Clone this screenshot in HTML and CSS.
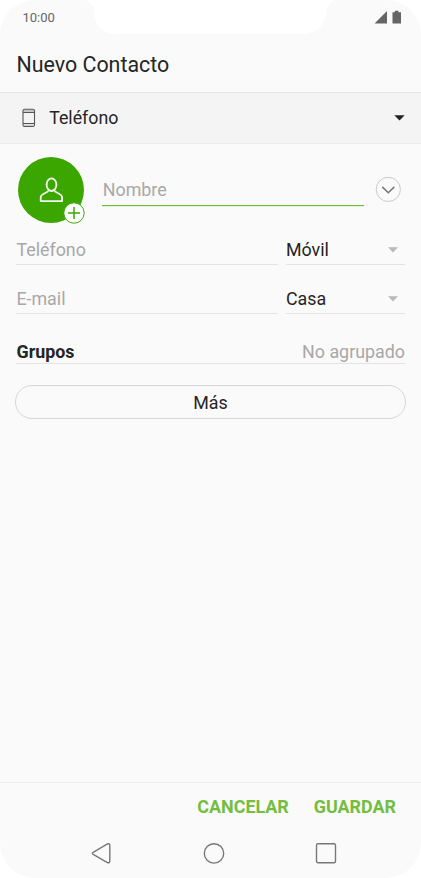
FILE: index.html
```html
<!DOCTYPE html>
<html lang="es">
<head>
<meta charset="utf-8">
<title>Nuevo Contacto</title>
<link rel="stylesheet" href="styles.css">
</head>
<body>
<div class="phone">
  <svg class="notch" width="252" height="34" viewBox="0 0 252 34"><path d="M0 0C7 1 10 7 10 13C11 25 19 34 32 34H219C232 34 241 25 242 13C243 7 245 1 252 0Z" fill="#fff"/></svg>
  <header class="status">
    <span>10:00</span>
    <svg width="28" height="14" viewBox="0 0 28 14"><path d="M1.5 13.5L14 1V13.5ZM19.5 2.2H21.8V0.8H25.5V2.2H28V13.5H19.5Z" fill="#656565"/></svg>
  </header>
  <h1 class="title">Nuevo Contacto</h1>
  <div class="account">
    <svg width="14" height="20" viewBox="0 0 14 20" fill="none" stroke="#555"><rect x="1" y="1.2" width="11.5" height="17.3" rx="1.6" stroke-width="1.1"/><path d="M1 4.4H12.5M1 15.5H12.5" stroke-width="1.2"/><path d="M2 2.6H12M2 17.2H12" stroke="#bbb"/></svg>
    <span class="account-name">Teléfono</span>
    <svg class="caret" width="11" height="6" viewBox="0 0 11 6"><path d="M0.3 0.3H10.7L5.5 5.6Z" fill="#222"/></svg>
  </div>
  <main class="form">
    <div class="name-row">
      <div class="avatar">
        <svg width="24" height="26" viewBox="0 0 24 26" fill="none" stroke="#f2faee" stroke-width="1.8" stroke-linejoin="round"><ellipse cx="12.5" cy="7.7" rx="4.9" ry="6.3"/><path d="M9.3 13.5C9.3 16 1.7 16.2 1.7 20.4V24.1H23.1V20.4C23.1 16.2 15.7 16 15.7 13.5"/></svg>
        <svg class="badge" width="22" height="22" viewBox="0 0 22 22"><circle cx="11" cy="11" r="10.2" fill="#fcfffb" stroke="#43a817" stroke-width="1"/><path d="M11 5V17M5 11H17" stroke="#3aa505" stroke-width="1.5"/></svg>
      </div>
      <div class="name-field">Nombre</div>
      <svg class="expand" width="26" height="26" viewBox="0 0 26 26" fill="none"><circle cx="13.3" cy="13.4" r="12.1" stroke="#c9c9c9"/><path d="M7.3 10.9L13.3 16.7L19.3 10.9" stroke="#777" stroke-width="1.5"/></svg>
    </div>
    <div class="row">
      <div class="field hint">Teléfono</div>
      <div class="field select">Móvil<svg width="10" height="6" viewBox="0 0 10 6"><path d="M0 0.3H10L5 5.5Z" fill="#b9b9b9"/></svg></div>
    </div>
    <div class="row">
      <div class="field hint">E-mail</div>
      <div class="field select">Casa<svg width="10" height="6" viewBox="0 0 10 6"><path d="M0 0.3H10L5 5.5Z" fill="#b9b9b9"/></svg></div>
    </div>
    <div class="groups"><b>Grupos</b><span>No agrupado</span></div>
    <div class="more">Más</div>
  </main>
  <footer class="actions"><span>CANCELAR</span><span>GUARDAR</span></footer>
  <nav class="nav">
    <svg width="22" height="22" viewBox="0 0 22 22"><path d="M2.2 10.4L16.4 2Q18.8 1 18.8 3.5V19Q18.8 21.5 16.4 20.5L2.2 12.4Q.6 11.4 2.2 10.4Z"/></svg>
    <svg width="22" height="22" viewBox="0 0 22 22"><circle cx="11" cy="11.4" r="9.7"/></svg>
    <svg width="22" height="22" viewBox="0 0 22 22"><rect x="1.5" y="1.8" width="19" height="19" rx="1.5"/></svg>
  </nav>
</div>
</body>
</html>
```
FILE: styles.css
```css
* { box-sizing: border-box; }
body { margin: 0; background: #fff; font-family: Roboto, sans-serif; color: #252525; }
svg { display: block; flex: none; }
.phone {
  position: relative;
  display: flex;
  flex-direction: column;
  width: 421px;
  height: 878px;
  border-radius: 35px;
  overflow: hidden;
  background: #fafafa;
}
.notch { position: absolute; left: 84px; top: 0; }
.status {
  display: flex;
  justify-content: space-between;
  height: 34px;
  padding: 10px 20px 0 22.5px;
  font-size: 13px;
  line-height: 16px;
  color: #666;
}
.title { margin: 0; height: 58px; padding-left: 16.5px; font-size: 21.4px; font-weight: 400; line-height: 61px; }
.account {
  display: flex;
  align-items: center;
  height: 52px;
  padding: 0 16px 0 22px;
  border-top: 1px solid #e8e8e8;
  border-bottom: 1px solid #ececec;
  background: #f4f4f4;
  font-size: 17.8px;
}
.account-name { margin-left: 13.2px; line-height: 50px; }
.caret { margin-left: auto; }
.form { flex: 1; padding: 11px 16px 0; font-size: 17.85px; }
.name-row { display: flex; height: 68px; }
.avatar {
  position: relative;
  display: flex;
  align-items: center;
  justify-content: center;
  width: 66px;
  height: 66px;
  margin: 1.5px 0 0 2.3px;
  border-radius: 50%;
  background: #3ba600;
}
.badge { position: absolute; left: 45.2px; top: 45.5px; }
.name-field { width: 261.7px; height: 51px; margin-left: 18px; padding-left: .5px; border-bottom: 1px solid #6cc038; box-shadow: 0 1px #e2f2d8; line-height: 69px; color: #a8a8a8; }
.expand { margin: 21px 0 0 11px; }
.row { display: flex; gap: 8px; height: 49px; }
.field { height: 42px; border-bottom: 1px solid #e3e3e3; line-height: 53px; }
.hint { width: 262px; padding-left: .4px; color: #a8a8a8; }
.select { display: flex; flex: 1; align-items: flex-start; justify-content: space-between; }
.select svg { margin: 23.5px 7.5px 0 0; }
.groups { display: flex; justify-content: space-between; height: 43px; border-bottom: 1px solid #e3e3e3; line-height: 61px; }
.groups b { padding-left: .5px; font-weight: 700; }
.groups span { color: #a8a8a8; }
.more { height: 34px; margin: 21px -1px 0; border: 1px solid #d6d6d6; border-radius: 17px; text-align: center; line-height: 33px; }
.actions {
  display: flex;
  justify-content: flex-end;
  gap: 25px;
  height: 49px;
  padding-right: 25px;
  border-top: 1px solid #ededed;
  font-size: 17.9px;
  font-weight: 700;
  line-height: 47px;
  color: #74bd3e;
}
.nav { display: flex; gap: 90px; height: 47px; padding: 11px 0 0 90.5px; fill: none; stroke: #777; stroke-width: 1.4; }
```
